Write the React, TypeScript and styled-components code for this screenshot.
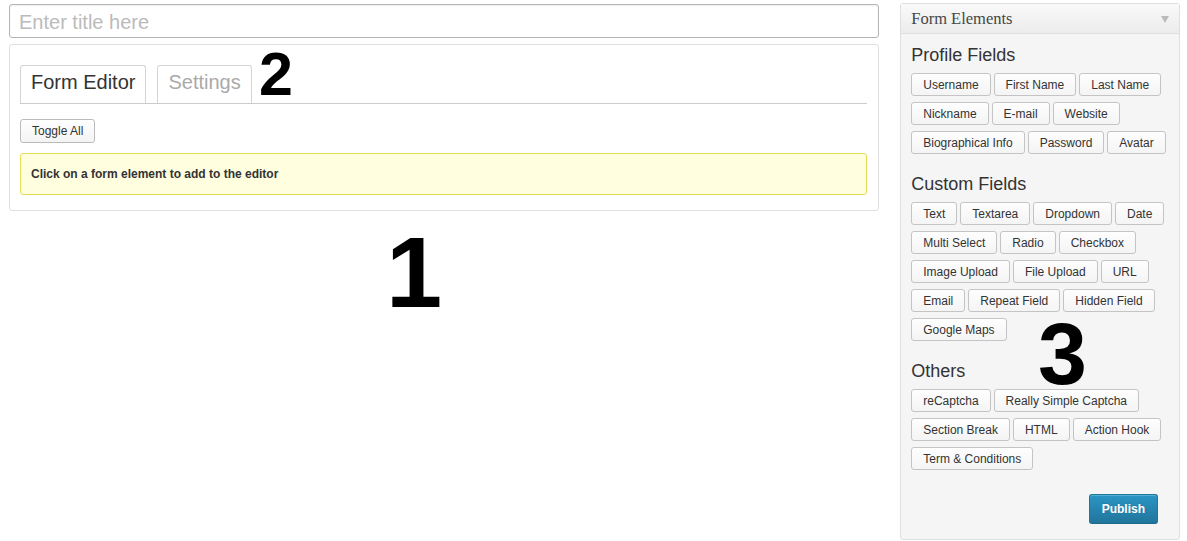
import React from 'react';
import styled, { createGlobalStyle } from 'styled-components';

const profileFields = ['Username', 'First Name', 'Last Name', 'Nickname', 'E-mail', 'Website', 'Biographical Info', 'Password', 'Avatar'];
const customFields = [
  'Text',
  'Textarea',
  'Dropdown',
  'Date',
  'Multi Select',
  'Radio',
  'Checkbox',
  'Image Upload',
  'File Upload',
  'URL',
  'Email',
  'Repeat Field',
  'Hidden Field',
  'Google Maps',
];
const others = ['reCaptcha', 'Really Simple Captcha', 'Section Break', 'HTML', 'Action Hook', 'Term & Conditions'];

const sections = [
  { title: 'Profile Fields', items: profileFields },
  { title: 'Custom Fields', items: customFields },
  { title: 'Others', items: others },
];

function App(): JSX.Element {
  return (
    <Page>
      <GlobalStyle />
      <Main>
        <TitleInput placeholder="Enter title here" />
        <EditorBox>
          <TabNav>
            <Tab active>Form Editor</Tab>
            <Tab>Settings</Tab>
          </TabNav>
          <Button>Toggle All</Button>
          <Notice>Click on a form element to add to the editor</Notice>
        </EditorBox>
      </Main>

      <Sidebar>
        <SidebarHeader>
          <span>Form Elements</span>
          <Arrow />
        </SidebarHeader>
        <SidebarBody>
          {sections.map((s) => (
            <Section key={s.title}>
              <SectionTitle>{s.title}</SectionTitle>
              <ButtonList>
                {s.items.map((item) => (
                  <Button key={item}>{item}</Button>
                ))}
              </ButtonList>
            </Section>
          ))}
          <PublishRow>
            <PublishButton>Publish</PublishButton>
          </PublishRow>
        </SidebarBody>
      </Sidebar>

      {/* annotation numbers laid over the screenshot */}
      <Marker size={101} style={{ left: 386, top: 236 }}>1</Marker>
      <Marker size={61} style={{ left: 259, top: 53 }}>2</Marker>
      <Marker size={88} style={{ left: 1038, top: 322 }}>3</Marker>
    </Page>
  );
}

const GlobalStyle = createGlobalStyle`
  html, body {
    margin: 0;
    padding: 0;
    background: #fff;
  }
  body {
    font-family: 'Liberation Sans', Arial, sans-serif;
    color: #333;
  }
  * {
    box-sizing: border-box;
  }
`;

const Page = styled.div`
  position: relative;
  display: flex;
  align-items: flex-start;
  gap: 21px;
  padding: 3px 7px 0 9px;
  width: 1187px;
  height: 541px;
  overflow: hidden;
`;

const Main = styled.div`
  width: 871px;
  display: flex;
  flex-direction: column;
  gap: 6px;
  padding-top: 1px;
`;

const TitleInput = styled.input`
  width: 100%;
  height: 34px;
  margin: 0;
  padding: 2px 9px 0;
  border: 1px solid #b4b4b4;
  border-radius: 3px;
  box-shadow: inset 0 1px 2px rgba(0, 0, 0, 0.07);
  font-family: 'Liberation Sans', Arial, sans-serif;
  font-size: 20px;
  color: #333;
  outline: none;
  &::placeholder {
    color: #bbb;
  }
`;

const EditorBox = styled.div`
  border: 1px solid #dfdfdf;
  border-radius: 3px;
  padding: 20px 11px 15px 10px;
  display: flex;
  flex-direction: column;
  align-items: flex-start;
`;

const TabNav = styled.div`
  align-self: stretch;
  display: flex;
  gap: 11px;
  border-bottom: 1px solid #ccc;
  margin-bottom: 15px;
`;

const Tab = styled.div<{ active?: boolean }>`
  padding: 4px 10px 9px;
  border: 1px solid #d4d4d4;
  border-bottom: none;
  border-radius: 3px 3px 0 0;
  background: #fff;
  font-size: 20px;
  line-height: 24px;
  color: ${(p) => (p.active ? '#333' : '#aaa')};
`;

const Button = styled.div`
  display: inline-flex;
  align-items: center;
  height: 24px;
  padding: 0 11px;
  border: 1px solid #bbb;
  border-radius: 3px;
  background: linear-gradient(to bottom, #fefefe, #f4f4f4);
  box-shadow: inset 0 1px 0 #fff;
  font-size: 12px;
  color: #333;
  white-space: nowrap;
  cursor: pointer;
`;

const Notice = styled.div`
  align-self: stretch;
  margin-top: 10px;
  padding: 13px 10px;
  line-height: 14px;
  border: 1px solid #e6db55;
  border-radius: 3px;
  background: #ffffe0;
  font-size: 12px;
  font-weight: bold;
  color: #333;
`;

const Sidebar = styled.div`
  width: 280px;
  border: 1px solid #dfdfdf;
  border-radius: 3px;
  background: #f5f5f5;
`;

const SidebarHeader = styled.div`
  height: 30px;
  display: flex;
  align-items: center;
  justify-content: space-between;
  padding: 0 10px;
  background: linear-gradient(to bottom, #f9f9f9, #ececec);
  border-bottom: 1px solid #dfdfdf;
  font-family: 'Liberation Serif', Georgia, serif;
  font-size: 16.5px;
  color: #464646;
`;

const Arrow = styled.span`
  width: 0;
  height: 0;
  border-left: 4px solid transparent;
  border-right: 4px solid transparent;
  border-top: 7px solid #bbb;
  margin-top: 2px;
`;

const SidebarBody = styled.div`
  padding: 10px 10px 15px;
  display: flex;
  flex-direction: column;
  gap: 19px;
`;

const Section = styled.div``;

const SectionTitle = styled.h3`
  margin: 0 0 7px;
  font-size: 18px;
  line-height: 22px;
  font-weight: normal;
  color: #333;
`;

const ButtonList = styled.div`
  display: flex;
  flex-wrap: wrap;
  gap: 6px 3px;
  ${Button} {
    height: 23px;
    padding: 0 11px;
    border-color: #c4c4c4;
  }
`;

const PublishRow = styled.div`
  display: flex;
  justify-content: flex-end;
  padding-right: 11px;
  margin-top: 5px;
`;

const PublishButton = styled.div`
  height: 30px;
  display: inline-flex;
  align-items: center;
  padding: 0 12px;
  border: 1px solid #21759b;
  border-bottom-color: #1e6a8d;
  border-radius: 3px;
  background: linear-gradient(to bottom, #2a95c5, #21759b);
  box-shadow: inset 0 1px 0 rgba(120, 200, 230, 0.5);
  color: #fff;
  font-size: 12px;
  font-weight: bold;
  text-shadow: 0 -1px 0 rgba(0, 0, 0, 0.1);
  cursor: pointer;
`;

const Marker = styled.div<{ size: number }>`
  position: absolute;
  font-family: 'Liberation Sans', Arial, sans-serif;
  font-weight: bold;
  font-size: ${(p) => p.size}px;
  line-height: 0.72;
  color: #000;
  pointer-events: none;
`;

export default App;
